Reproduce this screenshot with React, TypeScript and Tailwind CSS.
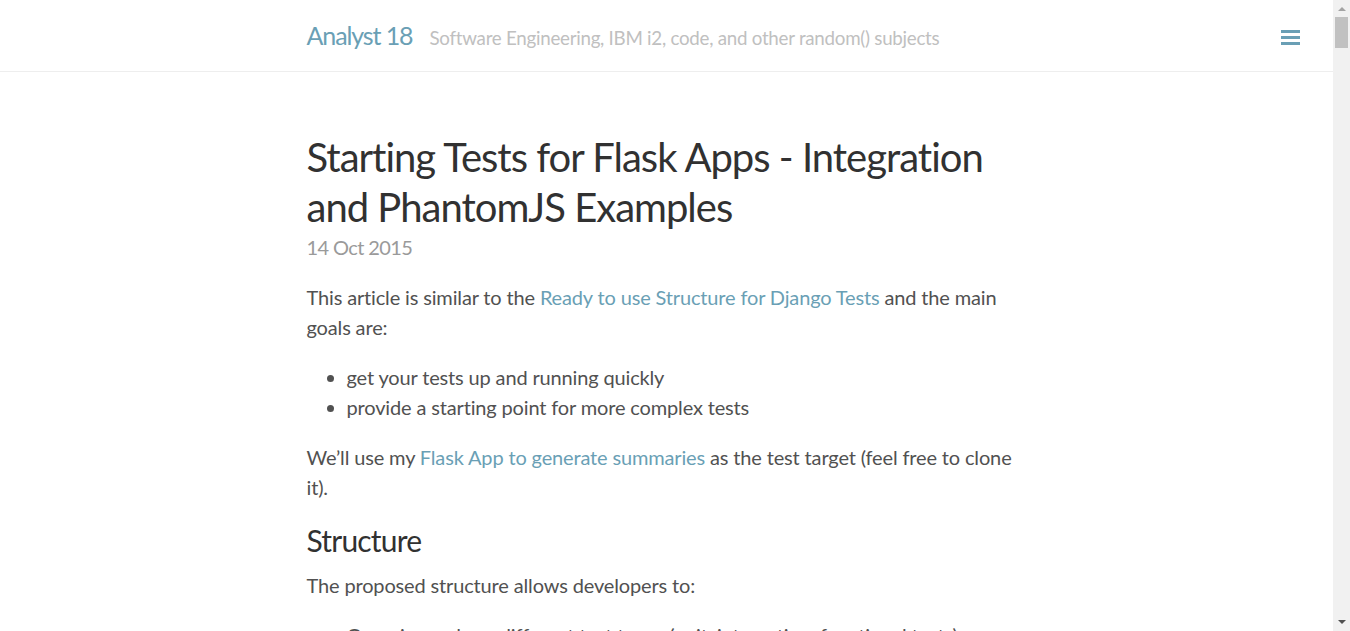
const goals = ['get your tests up and running quickly', 'provide a starting point for more complex tests'];

const allows = [
  'Organize and run different test types (unit, integration, functional tests)',
  'Keep fixtures and helpers in one place',
  'Run the whole suite with a single command',
];

function Link({ children }: { children: React.ReactNode }) {
  return (
    <a href="#" className="text-[#6a9fb5] no-underline hover:underline">
      {children}
    </a>
  );
}

function Scrollbar() {
  return (
    <div className="flex w-[17px] shrink-0 flex-col items-center bg-[#f1f1f1]">
      <div className="mt-[7px] h-0 w-0 border-x-[4px] border-b-[4px] border-x-transparent border-b-[#a3a3a3]" />
      <div className="mt-[6px] h-[31px] w-[13px] bg-[#c1c1c1]" />
      <div className="flex-1" />
      <div className="mb-[7px] h-0 w-0 border-x-[4px] border-t-[4px] border-x-transparent border-t-[#505050]" />
    </div>
  );
}

export default function App() {
  return (
    <div className="flex h-screen overflow-hidden bg-white font-['Lato',sans-serif] text-[20px] leading-[1.5] tracking-[-0.15px] text-[#515151]">
      <div className="min-w-0 flex-1 overflow-hidden">
        {/* Masthead */}
        <header className="relative border-b border-[#eeeeee] py-5">
          <div className="mx-auto max-w-[760px] px-5">
            <h3 className="text-[25px] leading-[1.25] tracking-[-1.1px] text-[#6a9fb5]">
              <a href="#">Analyst 18</a>
              <small className="ml-[17px] text-[18.75px] tracking-[-0.27px] text-[#c0c0c0]">
                Software Engineering, IBM i2, code, and other random() subjects
              </small>
            </h3>
          </div>
          <button className="absolute right-[33px] top-[30px] flex flex-col gap-[3px]">
            <span className="block h-[3px] w-[19px] bg-[#6a9fb5]" />
            <span className="block h-[3px] w-[19px] bg-[#6a9fb5]" />
            <span className="block h-[3px] w-[19px] bg-[#6a9fb5]" />
          </button>
        </header>

        {/* Post */}
        <main className="mx-auto mt-[60px] max-w-[760px] px-5">
          <article>
            <h1 className="mb-[10px] text-[40px] leading-[1.25] tracking-[-1px] text-[#313131]">
              Starting Tests for Flask Apps - Integration and PhantomJS Examples
            </h1>
            <span className="-mt-[10px] mb-5 block tracking-[-0.6px] text-[#9a9a9a]">14 Oct 2015</span>

            <p className="mb-5">
              This article is similar to the <Link>Ready to use Structure for Django Tests</Link> and the main goals
              are:
            </p>
            <ul className="mb-5 list-disc pl-10">
              {goals.map((g) => (
                <li key={g}>{g}</li>
              ))}
            </ul>
            <p className="mb-5">
              We’ll use my <Link>Flask App to generate summaries</Link> as the test target (feel free to clone it).
            </p>

            <h2 className="mb-[10px] mt-5 text-[30px] leading-[1.25] tracking-[-0.8px] text-[#313131]">Structure</h2>
            <p className="mb-5">The proposed structure allows developers to:</p>
            <ul className="mb-5 list-disc pl-10">
              {allows.map((a) => (
                <li key={a}>{a}</li>
              ))}
            </ul>
          </article>
        </main>
      </div>
      <Scrollbar />
    </div>
  );
}
